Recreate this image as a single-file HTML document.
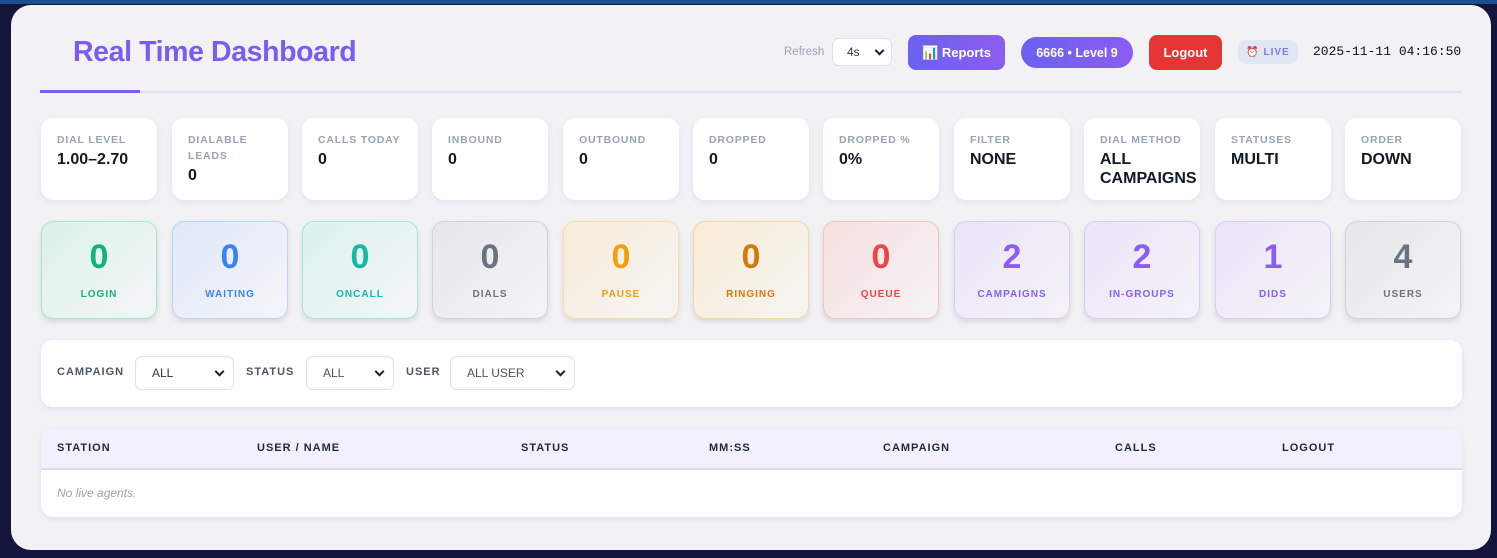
<!DOCTYPE html>
<html><head><meta charset="utf-8"><style>
*{box-sizing:border-box;margin:0;padding:0}
body{width:1497px;height:558px;background:#13163a;font-family:"Liberation Sans",sans-serif;position:relative;overflow:hidden}
.top{position:absolute;left:0;top:0;width:1497px;height:4px;background:#1b4e93}
.panel{position:absolute;left:11px;top:5px;width:1480px;height:545px;background:#f2f2f5;border-radius:20px}
.abs{position:absolute}
h1{position:absolute;left:62px;top:31px;font-size:28.5px;font-weight:bold;color:#7b5cf0;letter-spacing:-0.4px}
.line{position:absolute;left:29px;top:86px;width:1421px;height:2px;background:#e2dff5}
.line i{position:absolute;left:0;top:-1px;width:100px;height:3px;background:#7b5cf0}
.btn{position:absolute;height:35px;border-radius:8px;color:#fff;font-weight:bold;font-size:13px;display:flex;align-items:center;justify-content:center}
.sel{position:absolute;background:#fff;border:1px solid #e2dcf7;border-radius:7px;font-size:12px;color:#333;display:flex;align-items:center;padding-left:16px}
.sel b{position:absolute;right:10px;top:50%;width:7px;height:7px;border-right:2px solid #222;border-bottom:2px solid #222;transform:translateY(-70%) rotate(45deg)}
.card{position:absolute;top:113px;width:116px;height:82px;background:#fff;border-radius:12px;box-shadow:0 2px 6px rgba(120,110,200,.12);padding:14px 0 0 16px}
.card .l{font-size:10.5px;font-weight:bold;color:#9aa3b5;letter-spacing:.8px;line-height:16px}
.card .v{font-size:16px;font-weight:bold;color:#111827;line-height:19px;margin-top:2px}
.st{position:absolute;top:216px;width:116px;height:98px;border-radius:12px;border:1px solid;text-align:center;box-shadow:0 3px 6px rgba(0,0,0,.1)}
.st .n{font-size:34px;font-weight:bold;margin-top:15px;line-height:40px}
.st .t{font-size:10px;font-weight:bold;letter-spacing:1px;margin-top:12px}
.box{position:absolute;left:30px;width:1421px;background:#fff;border-radius:12px;box-shadow:0 2px 5px rgba(120,110,200,.15)}
.fl{position:absolute;top:26px;font-size:11px;font-weight:bold;color:#4b5563;letter-spacing:1px}
.th{position:absolute;top:14px;font-size:11px;font-weight:bold;color:#1f2937;letter-spacing:1px}
</style></head><body>
<div class="top"></div>
<div class="panel">
<h1>Real Time Dashboard</h1>
<div class="abs" style="left:773px;top:41px;font-size:11.5px;color:#9aa3b5">Refresh</div>
<div class="sel" style="left:821px;top:33px;width:60px;height:28px;padding-left:14px">4s<b style="right:8px"></b></div>
<div class="btn" style="left:897px;top:30px;width:97px;background:linear-gradient(90deg,#6a62f0,#8b5cf0)">📊&nbsp;Reports</div>
<div class="btn" style="left:1010px;top:32px;width:112px;height:31px;border-radius:16px;font-size:12.5px;background:linear-gradient(90deg,#6a62f0,#8b5cf0)">6666 • Level 9</div>
<div class="btn" style="left:1138px;top:30px;width:73px;background:#e53535">Logout</div>
<div class="btn" style="left:1227px;top:35px;width:60px;height:24px;background:#e1e6f5;color:#7b7fd9;font-size:10px;letter-spacing:1px">⏰&nbsp;LIVE</div>
<div class="abs" style="left:1302px;top:39px;font-family:'Liberation Mono',monospace;font-size:13px;color:#111">2025-11-11 04:16:50</div>
<div class="line"><i></i></div>

<div class="card" style="left:30px"><div class="l">DIAL LEVEL</div><div class="v">1.00–2.70</div></div>
<div class="card" style="left:161px"><div class="l">DIALABLE<br>LEADS</div><div class="v">0</div></div>
<div class="card" style="left:291px"><div class="l">CALLS TODAY</div><div class="v">0</div></div>
<div class="card" style="left:421px"><div class="l">INBOUND</div><div class="v">0</div></div>
<div class="card" style="left:552px"><div class="l">OUTBOUND</div><div class="v">0</div></div>
<div class="card" style="left:682px"><div class="l">DROPPED</div><div class="v">0</div></div>
<div class="card" style="left:812px"><div class="l">DROPPED %</div><div class="v">0%</div></div>
<div class="card" style="left:943px"><div class="l">FILTER</div><div class="v">NONE</div></div>
<div class="card" style="left:1073px"><div class="l">DIAL METHOD</div><div class="v">ALL<br>CAMPAIGNS</div></div>
<div class="card" style="left:1204px"><div class="l">STATUSES</div><div class="v">MULTI</div></div>
<div class="card" style="left:1334px"><div class="l">ORDER</div><div class="v">DOWN</div></div>

<div class="st" style="left:30px;border-color:#a7e6cc;background:linear-gradient(135deg,#dcf2ea,#f4f5f6);color:#12b47a"><div class="n">0</div><div class="t">LOGIN</div></div>
<div class="st" style="left:161px;border-color:#c0d2f7;background:linear-gradient(135deg,#e0e8fa,#f4f5f8);color:#3b82f6"><div class="n">0</div><div class="t">WAITING</div></div>
<div class="st" style="left:291px;border-color:#a7e6d8;background:linear-gradient(135deg,#dcf2ee,#f4f5f6);color:#14b8a6"><div class="n">0</div><div class="t">ONCALL</div></div>
<div class="st" style="left:421px;border-color:#d4d4d8;background:linear-gradient(135deg,#e7e7ea,#f4f4f6);color:#6b7280"><div class="n">0</div><div class="t">DIALS</div></div>
<div class="st" style="left:552px;border-color:#f6dcae;background:linear-gradient(135deg,#f8ecd9,#f5f4f3);color:#f59e0b"><div class="n">0</div><div class="t">PAUSE</div></div>
<div class="st" style="left:682px;border-color:#f6d8a4;background:linear-gradient(135deg,#f8ecd6,#f5f4f3);color:#d97706"><div class="n">0</div><div class="t">RINGING</div></div>
<div class="st" style="left:812px;border-color:#f4c4c4;background:linear-gradient(135deg,#f7e0e0,#f5f3f4);color:#ef4444"><div class="n">0</div><div class="t">QUEUE</div></div>
<div class="st" style="left:943px;border-color:#d9cdf7;background:linear-gradient(135deg,#ebe5f8,#f4f3f7);color:#8b5cf6"><div class="n">2</div><div class="t">CAMPAIGNS</div></div>
<div class="st" style="left:1073px;border-color:#d9cdf7;background:linear-gradient(135deg,#ebe5f8,#f4f3f7);color:#8b5cf6"><div class="n">2</div><div class="t">IN-GROUPS</div></div>
<div class="st" style="left:1204px;border-color:#d9cdf7;background:linear-gradient(135deg,#ebe5f8,#f4f3f7);color:#8b5cf6"><div class="n">1</div><div class="t">DIDS</div></div>
<div class="st" style="left:1334px;border-color:#d4d4d8;background:linear-gradient(135deg,#e7e7ea,#f4f4f6);color:#6b7280"><div class="n">4</div><div class="t">USERS</div></div>

<div class="box" style="top:335px;height:67px">
<div class="fl" style="left:16px">CAMPAIGN</div>
<div class="sel" style="left:94px;top:16px;width:99px;height:34px">ALL<b></b></div>
<div class="fl" style="left:205px">STATUS</div>
<div class="sel" style="left:265px;top:16px;width:88px;height:34px;color:#4b5563">ALL<b></b></div>
<div class="fl" style="left:365px">USER</div>
<div class="sel" style="left:409px;top:16px;width:125px;height:34px;color:#4b5563">ALL USER<b></b></div>
</div>

<div class="box" style="top:423px;height:89px;overflow:hidden">
<div style="position:absolute;left:0;top:0;width:100%;height:42px;background:#f2f0fc;border-bottom:2px solid #dcd7f7"></div>
<div class="th" style="left:16px">STATION</div>
<div class="th" style="left:216px">USER / NAME</div>
<div class="th" style="left:480px">STATUS</div>
<div class="th" style="left:668px">MM:SS</div>
<div class="th" style="left:842px">CAMPAIGN</div>
<div class="th" style="left:1074px">CALLS</div>
<div class="th" style="left:1241px">LOGOUT</div>
<div class="abs" style="left:16px;top:58px;font-size:12px;font-style:italic;color:#9aa3b5">No live agents.</div>
</div>
</div>
</body></html>
